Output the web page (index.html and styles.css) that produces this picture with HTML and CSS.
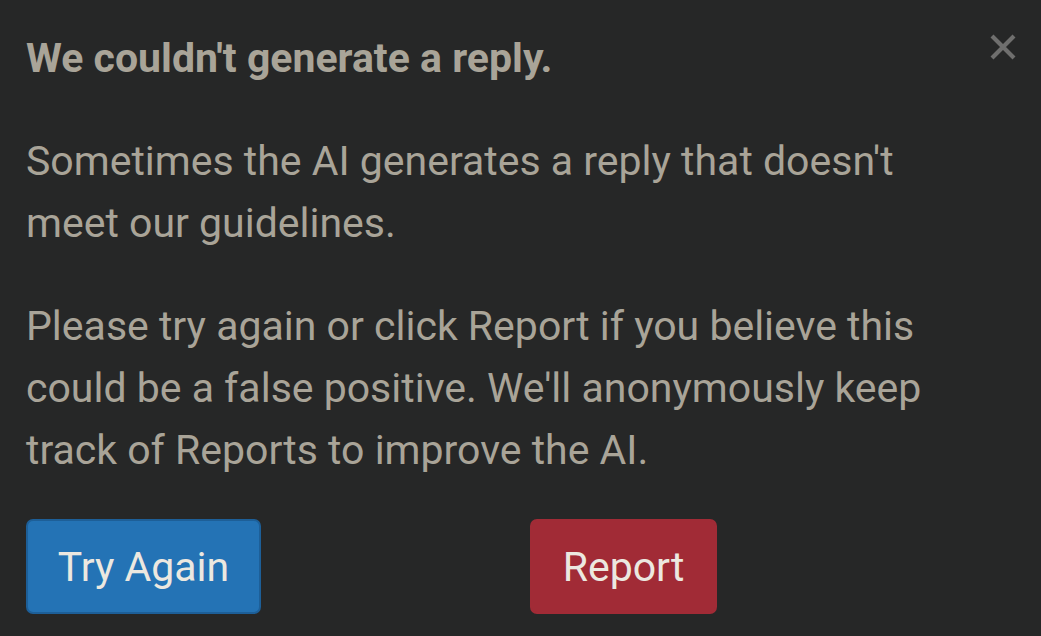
FILE: index.html
```html
<!DOCTYPE html>
<html>
<head>
<meta charset="utf-8">
<link rel="stylesheet" href="styles.css">
</head>
<body>
<div class="dialog">
  <div class="header">
    <h1 class="title">We couldn't generate a reply.</h1>
    <button class="close" aria-label="Close">
      <svg width="28" height="28" viewBox="0 0 28 28"><path d="M3 3L25 25M25 3L3 25" stroke="#6f6f6e" stroke-width="4.2" stroke-linecap="butt"/></svg>
    </button>
  </div>
  <p class="text">Sometimes the AI generates a reply that doesn't meet our guidelines.</p>
  <p class="text">Please try again or click Report if you believe this could be a false positive. We'll anonymously keep track of Reports to improve the AI.</p>
  <div class="actions">
    <button class="btn btn-primary">Try Again</button>
    <button class="btn btn-danger">Report</button>
  </div>
</div>
</body>
</html>
```
FILE: styles.css
```css
html, body {
  margin: 0;
  padding: 0;
  background: #262727;
  width: 1041px;
  height: 636px;
  overflow: hidden;
}
.dialog {
  font-family: Roboto, "Liberation Sans", sans-serif;
  color: #a9a498;
  padding: 0 24px 0 26px;
}
.header {
  display: flex;
  justify-content: space-between;
  align-items: flex-start;
}
.title {
  margin: 0;
  padding-top: 34px;
  font-size: 41px;
  font-weight: 700;
  line-height: 48px;
}
.close {
  background: none;
  border: 0;
  padding: 0;
  margin-top: 33px;
  width: 28px;
  height: 28px;
}
.close svg { display: block; }
.text {
  margin: 0;
  font-size: 41px;
  line-height: 62px;
  max-width: 940px;
}
.text + .text { margin-top: 41px; }
.dialog > .text:first-of-type { margin-top: 48px; }
.actions {
  display: grid;
  grid-template-columns: 504px auto;
  justify-content: start;
  margin-top: 38px;
}
.btn {
  font-family: Roboto, "Liberation Sans", sans-serif;
  font-size: 41px;
  color: #ece8e0;
  border-radius: 7px;
  height: 95px;
  padding: 0 20px;
  cursor: pointer;
}
.btn-primary {
  width: 235px;
  background: #2473b5;
  border: 2px solid #1d5f98;
}
.btn-danger {
  width: 187px;
  background: #a12b36;
  border: 2px solid #a12b36;
}
```
